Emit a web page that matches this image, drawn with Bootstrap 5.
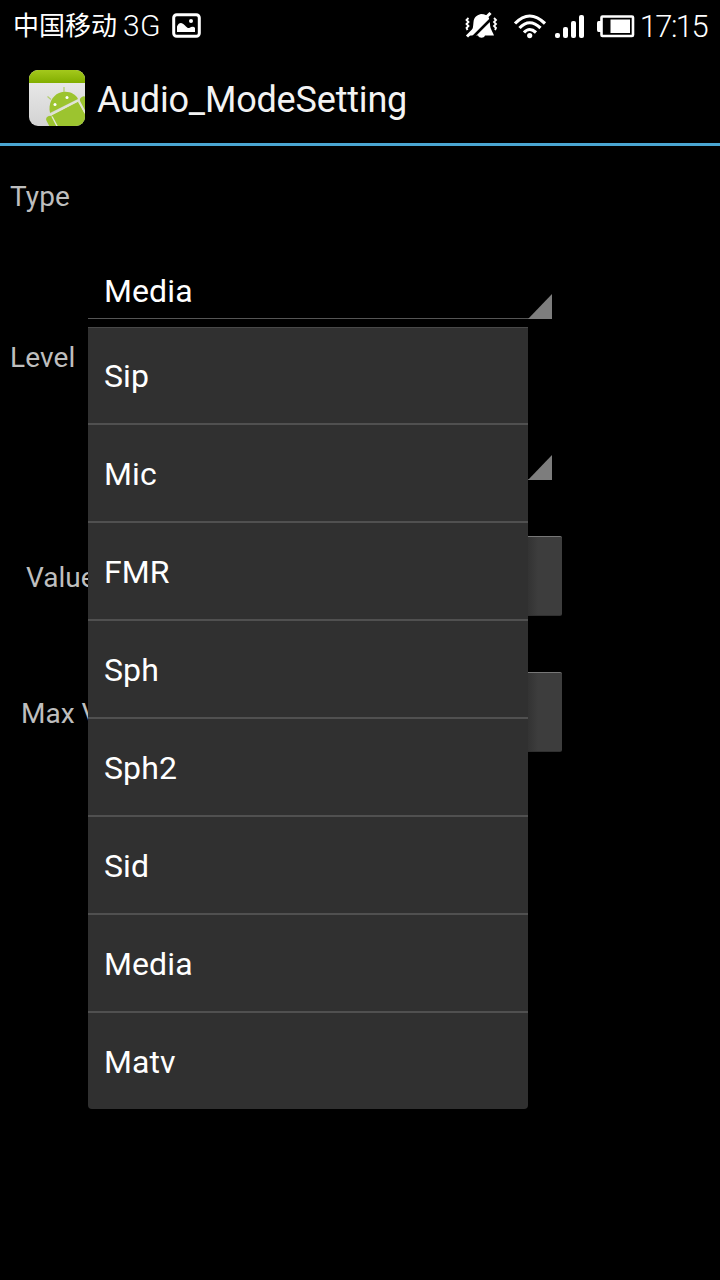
<!DOCTYPE html>
<html lang="en">
<head>
<meta charset="utf-8">
<meta name="viewport" content="width=device-width, initial-scale=1">
<title>Audio_ModeSetting</title>
<link href="https://cdn.jsdelivr.net/npm/bootstrap@5.3.0/dist/css/bootstrap.min.css" rel="stylesheet">
<script src="https://cdn.jsdelivr.net/npm/bootstrap@5.3.0/dist/js/bootstrap.bundle.min.js" defer></script>
<style>
body{background:#000;font-family:Roboto,"Noto Sans CJK SC",sans-serif;color:#fff;width:720px;height:1280px;overflow:hidden}
.status-bar{height:50px;padding:2px 13px 0;line-height:48px;white-space:nowrap}
.carrier{font-size:26px}
.network{font-size:30px;font-weight:300;margin-left:6px;letter-spacing:.3px}
.picture-icon{margin-left:11px}
.clock{font-size:31px;font-weight:300;letter-spacing:-1.6px;margin-left:4px;margin-right:0;padding-top:2px}
.action-bar{height:96px;border-bottom:3px solid #4aa6d2;padding-left:29px;padding-top:2px}
.app-title{font-size:36px;color:#f3f3f3;margin-left:12px;line-height:40px;padding-top:4px;letter-spacing:-.18px}
.field-label{font-size:28px;line-height:34px;color:#bebebe;white-space:nowrap}
.type-field{height:161px;padding:34px 10px 0;letter-spacing:.1px}
.spinner{width:464px;height:66px;margin:39px 0 0 78px;padding:6px 16px 0;font-size:32px;line-height:64px;border-bottom:1px solid #555;position:relative}
.spinner::after{content:"";position:absolute;right:0;bottom:-1px;width:24px;height:25px;background:#7d7d7d;clip-path:polygon(100% 0,100% 100%,0 100%)}
.options{top:74px;left:0;width:440px;z-index:5;border-radius:0 0 4px 4px;font-size:32px}
.options .list-group-item{height:98px;padding:0 16px;line-height:98px;background:#303030;color:#fff;border:0;border-bottom:2px solid #505050}
.options .list-group-item:first-child{box-shadow:inset 0 1px #484848;border-radius:0}
.options .list-group-item:last-child{height:96px;border-bottom:0;border-radius:0 0 4px 4px}
.value-row{height:80px;width:562px;padding-left:21px}
.first-row{margin-top:68px;margin-bottom:56px;padding-left:26px}
.value-row .field-label{width:140px;padding-top:3px}
.value-btn{flex:1;height:80px;background:linear-gradient(to left,#3d3d3d 24px,#323232 35px);border:0;border-top:1px solid #777;border-bottom:1px solid #303030;border-radius:2px}
</style>
</head>
<body>
<header class="status-bar d-flex align-items-center">
  <span class="carrier">中国移动</span><span class="network">3G</span>
  <svg class="picture-icon" width="30" height="26" viewBox="0 0 30 26"><rect x="1.700" y="1.700" width="25.600" height="21.600" rx="3" fill="none" stroke="#fff" stroke-width="3"/><path d="M5 19V13.500C7 9 10 9 13 12.500C15 15 17 16 19 14Q22 13 23 15V19Z" fill="#fff"/><circle cx="19" cy="8" r="2" fill="#fff"/></svg>
  <svg class="ms-auto" width="175" height="32" viewBox="460 10 175 32" fill="#fff">
    <path d="M468 35C472 30 472 28 472.500 22C473 17 476 15 480 14C484 14 486 15 488 18L489 24C489 29 492 32 493 35.500H484C483 38.500 478 38.500 477 35.500H468Z"/>
    <path d="M469.500 39.500 494 15" stroke="#000" stroke-width="2.500"/>
    <path d="M466 36.500 489.500 13" stroke="#fff" stroke-width="3"/>
    <path d="M467.500 18l-2 2 2 2-2 2 2 2-2 2 1 2M493 18l2 2-2 2 2 2-2 2 2 2-1 2" fill="none" stroke="#fff" stroke-width="1.800"/>
    <g fill="none" stroke="#fff" stroke-width="3.200"><path d="M514 23.500Q528.500 8.500 544 23.500M518.500 28Q528.500 17.500 539.500 28M523 32.500Q528.500 26.500 535 32.500"/></g><circle cx="528.700" cy="35.600" r="2.600"/>
    <rect x="554" y="33" width="5" height="5" rx="2"/><rect x="562" y="27" width="5" height="11" rx="2"/><rect x="570" y="21" width="5" height="17" rx="2"/><rect x="578" y="15" width="5" height="23" rx="2"/>
    <path d="M600 21H597.500Q596 21 596 23V30Q596 32 597.500 32H600Z"/><rect x="600.500" y="16.500" width="31.500" height="19.500" rx="1" fill="none" stroke="#fff" stroke-width="2.600"/><rect x="609.500" y="19.500" width="19.500" height="13.500"/>
  </svg>
  <span class="clock">17:15</span>
</header>
<div class="action-bar d-flex align-items-center">
  <svg width="56" height="56" viewBox="0 0 56 56"><defs><clipPath id="tile"><rect width="56" height="56" rx="9"/></clipPath><linearGradient id="paper" x2="0" y2="1"><stop stop-color="#ededed"/><stop offset="1" stop-color="#d3d3d3"/></linearGradient><linearGradient id="lime" x2="0" y2="1"><stop stop-color="#a4c91c"/><stop offset="1" stop-color="#82ae00"/></linearGradient></defs>
  <g clip-path="url(#tile)"><rect width="56" height="56" fill="url(#paper)"/><rect width="56" height="13" fill="url(#lime)"/>
  <g fill="#9cc42f"><path d="M21 43C19 34 23 26 30 23C38 20 46 23 49 29Z"/><path d="M22.500 45.500 49.500 31.500 60 52V60H30Z"/><rect x="17" y="46" width="7" height="18" rx="3.500" transform="rotate(-28 20.500 49)"/><rect x="51" y="26.500" width="7" height="18" rx="3.500" transform="rotate(-28 54.500 30)"/></g>
  <path d="M21.500 45 49.500 30.500M23 46.500 28.500 57M49.500 31.500 56 43" stroke="#e3e8d2" stroke-width="1.400"/>
  <path d="M22 29.500 18.500 26.500M35 22V17" stroke="#b5cf72" stroke-width="1.300"/><circle cx="26" cy="34.500" r="1.500" fill="#fff"/><circle cx="38" cy="27.500" r="1.500" fill="#fff"/></g></svg>
  <span class="app-title">Audio_ModeSetting</span>
</div>
<main>
  <section class="type-field">
    <div class="field-label">Type</div>
    <div class="spinner">Media
      <ul class="list-group options position-absolute">
        <li class="list-group-item">Sip</li>
        <li class="list-group-item">Mic</li>
        <li class="list-group-item">FMR</li>
        <li class="list-group-item">Sph</li>
        <li class="list-group-item">Sph2</li>
        <li class="list-group-item">Sid</li>
        <li class="list-group-item">Media</li>
        <li class="list-group-item">Matv</li>
      </ul>
    </div>
  </section>
  <section class="type-field">
    <div class="field-label">Level</div>
    <div class="spinner"></div>
  </section>
  <div class="value-row first-row d-flex align-items-center"><span class="field-label">Value</span><button class="value-btn" type="button"></button></div>
  <div class="value-row d-flex align-items-center"><span class="field-label">Max Value</span><button class="value-btn" type="button"></button></div>
</main>
</body>
</html>
